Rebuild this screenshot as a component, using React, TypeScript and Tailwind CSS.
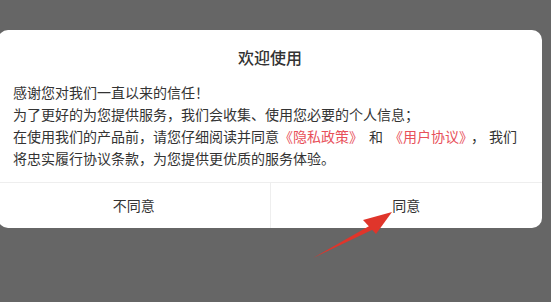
import React from "react";

export default function App() {
  const font = { fontFamily: '"Noto Sans CJK SC", "Noto Sans", sans-serif' };
  return (
    <div className="relative w-[551px] h-[302px] overflow-hidden bg-[#666666] pt-[30px]" style={font}>
      <div className="ml-[-2px] w-[544px] rounded-[10px] bg-white">
        <div className="pt-[15px] text-center text-[16px] leading-[24px] font-medium text-[#333333]">欢迎使用</div>
        <div className="mt-[12px] pl-[15px] pr-[12px] pb-[13px] text-[14px] leading-[22px] text-[#333333]">
          <div className="whitespace-nowrap">感谢您对我们一直以来的信任！</div>
          <div className="whitespace-nowrap">为了更好的为您提供服务，我们会收集、使用您必要的个人信息；</div>
          <div className="whitespace-nowrap">
            在使用我们的产品前，请您仔细阅读并同意<span className="text-[#e8505a]">《隐私政策》</span><span className="mx-[6px]">和</span><span className="text-[#e8505a]">《用户协议》</span><span className="ml-[5px] mr-[4px]">，</span>我们
          </div>
          <div className="whitespace-nowrap">将忠实履行协议条款，为您提供更优质的服务体验。</div>
        </div>
        <div className="flex border-t border-[#eeeeee] h-[46px] text-[14px] text-[#333333]">
          <div className="flex-1 flex items-center justify-center border-r border-[#eeeeee]">不同意</div>
          <div className="flex-1 flex items-center justify-center">同意</div>
        </div>
      </div>
      <svg className="absolute left-0 top-0" width="551" height="302" viewBox="0 0 551 302">
        <polygon points="313,258 371,225 374,229" fill="#e0352b" />
        <polygon points="392,212 363,220 376,234" fill="#e0352b" />
      </svg>
    </div>
  );
}
